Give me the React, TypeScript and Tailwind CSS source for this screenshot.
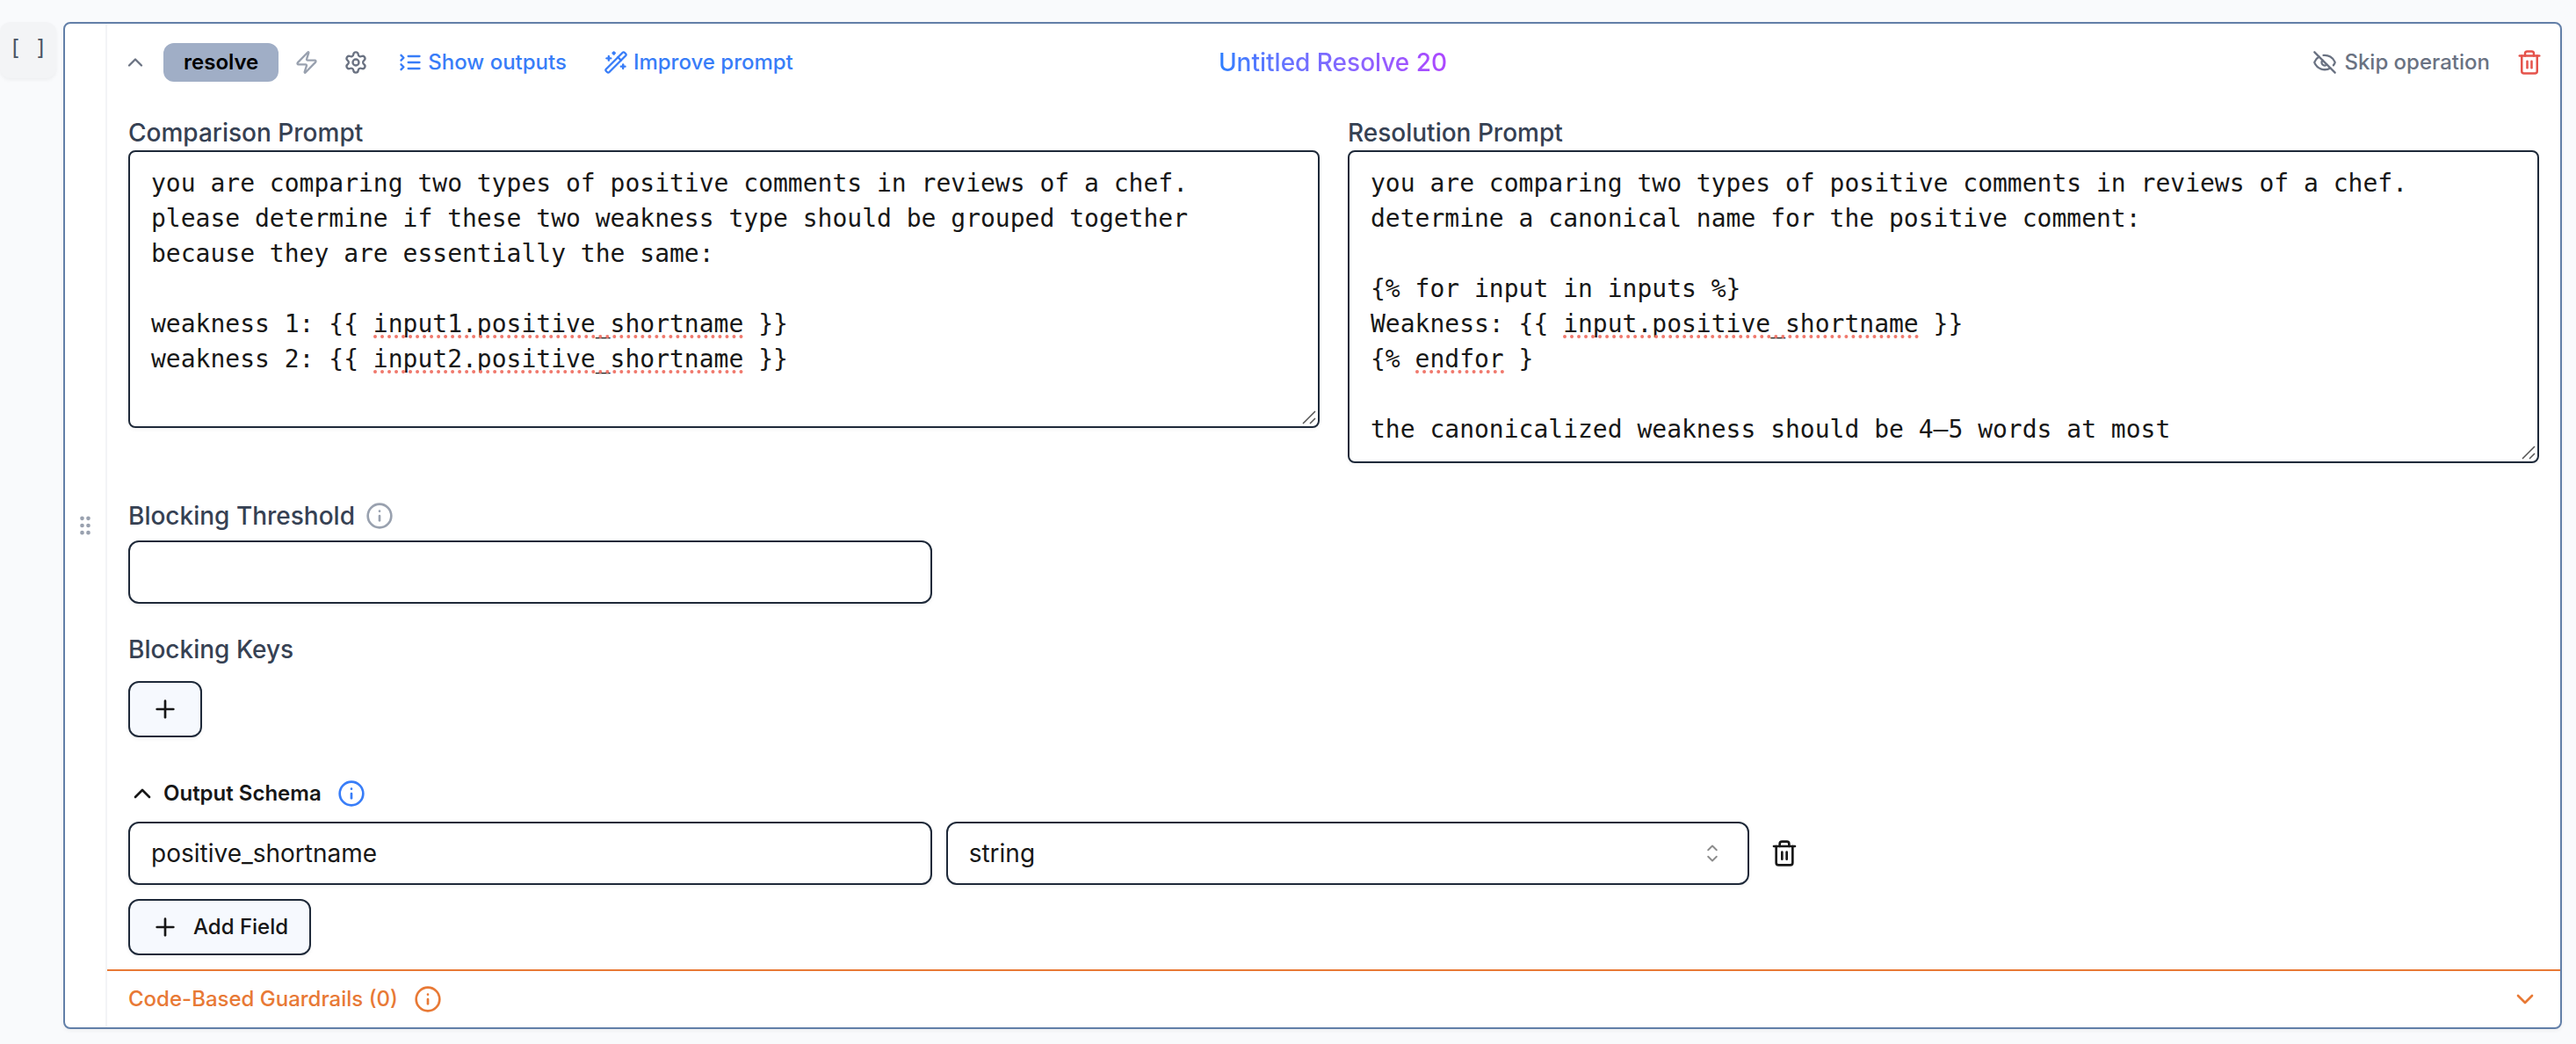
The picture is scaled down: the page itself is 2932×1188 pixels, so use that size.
import type { ReactNode } from "react";
import {
  ChevronDown,
  ChevronUp,
  EyeOff,
  GripVertical,
  Info,
  Plus,
  Settings,
  Trash2,
  WandSparkles,
  Zap,
} from "lucide-react";

type Mark = { line: number; column: number; length: number };

type PromptFieldProps = {
  id: string;
  label: string;
  rows: number;
  value: string;
  marks: Mark[];
};

const comparisonPrompt = `you are comparing two types of positive comments in reviews of a chef.
please determine if these two weakness type should be grouped together
because they are essentially the same:

weakness 1: {{ input1.positive_shortname }}
weakness 2: {{ input2.positive_shortname }}
`;

const resolutionPrompt = `you are comparing two types of positive comments in reviews of a chef.
determine a canonical name for the positive comment:

{% for input in inputs %}
Weakness: {{ input.positive_shortname }}
{% endfor }

the canonicalized weakness should be 4–5 words at most`;

function PromptField({ id, label, rows, value, marks }: PromptFieldProps) {
  return (
    <div>
      <label htmlFor={id} className="block text-[28px] leading-10 font-medium text-gray-700">
        {label}
      </label>
      <div className="relative">
        <textarea
          id={id}
          rows={rows}
          defaultValue={value}
          spellCheck={false}
          className="block w-full resize-none overflow-hidden rounded-lg border-2 border-gray-800 bg-white px-6 py-4 font-['DejaVu_Sans_Mono',monospace] text-[28px] leading-10 text-neutral-900 shadow-[0_2px_4px_rgba(0,0,0,0.05)]"
        />
        <div
          aria-hidden="true"
          className="pointer-events-none absolute inset-x-[26px] inset-y-[18px] font-['DejaVu_Sans_Mono',monospace] text-[28px] leading-10"
        >
          {marks.map((mark) => (
            <span
              key={mark.line}
              className="absolute h-9 border-b-4 border-dotted border-[#f0786c]"
              style={{
                top: `${mark.line * 40}px`,
                left: `${mark.column}ch`,
                width: `${mark.length}ch`,
              }}
            />
          ))}
        </div>
        <svg
          aria-hidden="true"
          viewBox="0 0 16 16"
          className="pointer-events-none absolute right-1 bottom-1 size-4 text-neutral-600"
          fill="none"
          stroke="currentColor"
          strokeWidth="1.5"
        >
          <path d="M1 15 15 1M9 15l6-6" />
        </svg>
      </div>
    </div>
  );
}

function OutputsIcon() {
  return (
    <svg
      aria-hidden="true"
      viewBox="0 0 24 24"
      className="size-7"
      fill="none"
      stroke="currentColor"
      strokeWidth="2"
      strokeLinecap="round"
      strokeLinejoin="round"
    >
      <path d="m3 10 2.5-2.5L3 5" />
      <path d="m3 19 2.5-2.5L3 14" />
      <path d="M10 6h11" />
      <path d="M10 12h11" />
      <path d="M10 18h11" />
    </svg>
  );
}

function LinkButton({ icon, children }: { icon: ReactNode; children: ReactNode }) {
  return (
    <button type="button" className="flex items-center gap-1.5 text-2xl font-medium text-[#387df8]">
      {icon}
      {children}
    </button>
  );
}

export default function App() {
  return (
    <div className="flex min-h-screen items-start gap-2 bg-[#f9fafc] pt-[25px] pr-4 pb-4 font-['Inter',sans-serif] text-neutral-900">
      <button
        type="button"
        aria-label="Cell status"
        className="flex size-16 shrink-0 items-center justify-center rounded-xl bg-gray-100 pb-1 font-['DejaVu_Sans_Mono',monospace] text-2xl whitespace-pre text-gray-600 shadow-[0_2px_4px_rgba(0,0,0,0.05)]"
      >
        [ ]
      </button>

      <section className="flex min-w-0 flex-1 rounded-lg border-2 border-[#627fa8] bg-white shadow-[0_2px_4px_rgba(0,0,0,0.05)]">
        <button
          type="button"
          aria-label="Drag operation"
          className="flex w-12 shrink-0 items-center justify-center border-r-2 border-gray-100 text-gray-400"
        >
          <GripVertical size={28} />
        </button>

        <div className="min-w-0 flex-1">
          <header className="grid h-22 grid-cols-[1fr_auto_1fr] items-center pr-5 pl-[18px]">
            <div className="flex items-center">
              <button type="button" aria-label="Collapse operation" className="mr-[18px] text-gray-500">
                <ChevronUp size={28} />
              </button>
              <span className="flex h-11 items-center rounded-xl bg-[#a0aec6] px-[23px] text-2xl font-semibold text-black">
                resolve
              </span>
              <button type="button" aria-label="Optimize" className="ml-[18px] text-gray-400">
                <Zap size={28} />
              </button>
              <button type="button" aria-label="Settings" className="ml-7 text-gray-500">
                <Settings size={28} />
              </button>
              <div className="ml-[34px] flex items-center gap-[42px]">
                <LinkButton icon={<OutputsIcon />}>Show outputs</LinkButton>
                <LinkButton icon={<WandSparkles size={28} />}>Improve prompt</LinkButton>
              </div>
            </div>
            <h2 className="bg-linear-to-r from-blue-500 to-purple-500 bg-clip-text text-[28px] leading-10 font-medium text-transparent">
              Untitled Resolve 20
            </h2>
            <div className="flex items-center justify-end gap-[30px]">
              <button type="button" className="flex items-center gap-2 text-2xl font-medium text-gray-500">
                <EyeOff size={28} />
                Skip operation
              </button>
              <button type="button" aria-label="Delete operation" className="text-[#e5534b]">
                <Trash2 size={30} />
              </button>
            </div>
          </header>

          <div className="px-6 py-4">
            <div className="grid grid-cols-2 items-start gap-8">
              <PromptField
                id="comparison-prompt"
                label="Comparison Prompt"
                rows={7}
                value={comparisonPrompt}
                marks={[
                  { line: 4, column: 15, length: 25 },
                  { line: 5, column: 15, length: 25 },
                ]}
              />
              <PromptField
                id="resolution-prompt"
                label="Resolution Prompt"
                rows={8}
                value={resolutionPrompt}
                marks={[
                  { line: 4, column: 13, length: 24 },
                  { line: 5, column: 3, length: 6 },
                ]}
              />
            </div>

            <div className="mt-10 flex items-center gap-3 text-[28px] leading-10 font-medium text-gray-700">
              <label htmlFor="blocking-threshold">Blocking Threshold</label>
              <button type="button" aria-label="About blocking threshold" className="text-gray-400">
                <Info size={32} />
              </button>
            </div>
            <input
              id="blocking-threshold"
              type="text"
              className="mt-2 block h-18 w-1/3 rounded-xl border-2 border-gray-800 bg-white px-6 text-[28px] shadow-[0_2px_4px_rgba(0,0,0,0.05)]"
            />

            <h3 className="mt-8 text-[28px] leading-10 font-medium text-gray-700">Blocking Keys</h3>
            <button
              type="button"
              aria-label="Add blocking key"
              className="mt-4 flex h-16 w-21 items-center justify-center rounded-xl border-2 border-gray-800 bg-[#f6f9fe] shadow-[0_2px_4px_rgba(0,0,0,0.05)]"
            >
              <Plus size={32} />
            </button>

            <div className="mt-12 flex h-8 items-center">
              <button type="button" className="flex items-center gap-2 text-2xl font-semibold">
                <ChevronUp size={32} />
                Output Schema
              </button>
              <button type="button" aria-label="About output schema" className="ml-[18px] text-[#387df8]">
                <Info size={32} />
              </button>
            </div>
            <div className="mt-4 flex items-center">
              <input
                type="text"
                aria-label="Field name"
                defaultValue="positive_shortname"
                className="h-18 w-1/3 rounded-xl border-2 border-gray-800 bg-white px-6 text-[28px] shadow-[0_2px_4px_rgba(0,0,0,0.05)]"
              />
              <div className="relative ml-4 w-1/3">
                <select
                  aria-label="Field type"
                  defaultValue="string"
                  className="block h-18 w-full appearance-none rounded-xl border-2 border-gray-800 bg-white px-6 text-[28px] shadow-[0_2px_4px_rgba(0,0,0,0.05)]"
                >
                  <option>string</option>
                  <option>float</option>
                  <option>int</option>
                  <option>boolean</option>
                  <option>list</option>
                </select>
                <svg
                  aria-hidden="true"
                  viewBox="0 0 15 15"
                  className="pointer-events-none absolute top-5 right-[26px] size-8 text-[#8c8c8c]"
                  fill="none"
                  stroke="currentColor"
                  strokeWidth="0.9"
                  strokeLinecap="round"
                  strokeLinejoin="round"
                >
                  <path d="M5.25 5.75 7.5 3.5l2.25 2.25M5.25 9.25 7.5 11.5l2.25-2.25" />
                </svg>
              </div>
              <button type="button" aria-label="Delete field" className="ml-6">
                <Trash2 size={32} />
              </button>
            </div>
            <button
              type="button"
              className="mt-4 flex h-16 items-center gap-4 rounded-xl border-2 border-gray-800 bg-[#f6f9fe] px-6 text-2xl font-medium shadow-[0_2px_4px_rgba(0,0,0,0.05)]"
            >
              <Plus size={32} />
              Add Field
            </button>
          </div>

          <footer className="flex h-[66px] items-center justify-between border-t-2 border-[#e87935] px-6 text-2xl font-medium text-[#e87935]">
            <div className="flex items-center gap-[18px]">
              <span>Code-Based Guardrails (0)</span>
              <button type="button" aria-label="About guardrails">
                <Info size={32} />
              </button>
            </div>
            <button type="button" aria-label="Expand guardrails">
              <ChevronDown size={32} />
            </button>
          </footer>
        </div>
      </section>
    </div>
  );
}
